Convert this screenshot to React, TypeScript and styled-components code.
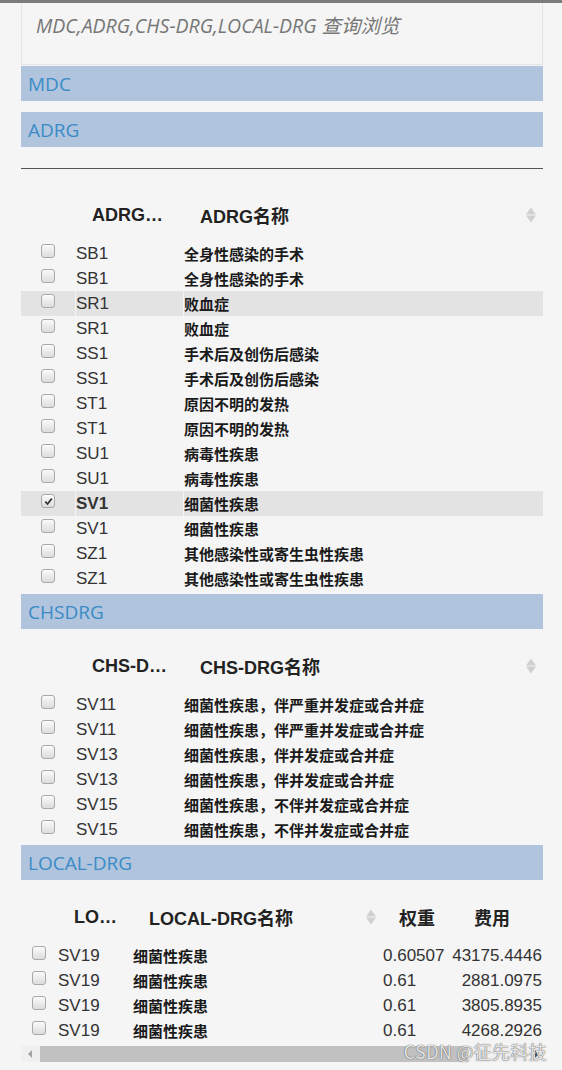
import React from "react";
import styled, { createGlobalStyle } from "styled-components";

type Row = { code: string; name: string; weight?: string; fee?: string };

const adrgRows: Row[] = [
  { code: "SB1", name: "全身性感染的手术" },
  { code: "SB1", name: "全身性感染的手术" },
  { code: "SR1", name: "败血症" },
  { code: "SR1", name: "败血症" },
  { code: "SS1", name: "手术后及创伤后感染" },
  { code: "SS1", name: "手术后及创伤后感染" },
  { code: "ST1", name: "原因不明的发热" },
  { code: "ST1", name: "原因不明的发热" },
  { code: "SU1", name: "病毒性疾患" },
  { code: "SU1", name: "病毒性疾患" },
  { code: "SV1", name: "细菌性疾患" },
  { code: "SV1", name: "细菌性疾患" },
  { code: "SZ1", name: "其他感染性或寄生虫性疾患" },
  { code: "SZ1", name: "其他感染性或寄生虫性疾患" },
];

const chsRows: Row[] = [
  { code: "SV11", name: "细菌性疾患，伴严重并发症或合并症" },
  { code: "SV11", name: "细菌性疾患，伴严重并发症或合并症" },
  { code: "SV13", name: "细菌性疾患，伴并发症或合并症" },
  { code: "SV13", name: "细菌性疾患，伴并发症或合并症" },
  { code: "SV15", name: "细菌性疾患，不伴并发症或合并症" },
  { code: "SV15", name: "细菌性疾患，不伴并发症或合并症" },
];

const localRows: Row[] = [
  { code: "SV19", name: "细菌性疾患", weight: "0.60507", fee: "43175.4446" },
  { code: "SV19", name: "细菌性疾患", weight: "0.61", fee: "2881.0975" },
  { code: "SV19", name: "细菌性疾患", weight: "0.61", fee: "3805.8935" },
  { code: "SV19", name: "细菌性疾患", weight: "0.61", fee: "4268.2926" },
];

const GlobalStyle = createGlobalStyle`
  html, body {
    margin: 0;
    padding: 0;
    background: #f5f5f5;
  }
  body {
    font-family: "Liberation Sans", Arial, "Noto Sans CJK SC", sans-serif;
    color: #333;
  }
`;

const Screen = styled.div`
  position: relative;
  width: 562px;
  height: 1070px;
  overflow: hidden;
  background: #f5f5f5;
`;

const TopStrip = styled.div`
  height: 3px;
  background: #7b7b7b;
`;

const Page = styled.div`
  width: 522px;
  margin-left: 21px;
`;

const TitleBox = styled.div`
  height: 62px;
  box-sizing: border-box;
  border: 1px solid #e4e4e4;
  border-top: 0;
  padding: 10px 0 0 14px;
`;

const TitleText = styled.div`
  font-family: "Open Sans", "Noto Sans CJK SC", sans-serif;
  font-style: italic;
  font-size: 19.5px;
  line-height: 26px;
  color: #777;
`;

const SectionBar = styled.div<{ $gap?: number }>`
  height: 35px;
  margin-top: ${(p) => p.$gap ?? 0}px;
  padding-left: 7px;
  background: #b0c4de;
  display: flex;
  align-items: center;
  font-family: "Open Sans", sans-serif;
  font-size: 19px;
  color: #3a8bc6;
`;

const Divider = styled.hr`
  height: 1px;
  border: 0;
  background: #555;
  margin: 21px 0 20px;
`;

const TableWrap = styled.div`
  margin-top: 11px;
  padding-bottom: 3px;
  overflow: hidden;
`;

const Grid = styled.div<{ $cols: string; $h: number; $active?: boolean }>`
  display: grid;
  grid-template-columns: ${(p) => p.$cols};
  height: ${(p) => p.$h}px;
  align-items: stretch;
  background: ${(p) => (p.$active ? "#e3e3e3" : "transparent")};
`;

const HeadCell = styled.div`
  position: relative;
  display: flex;
  align-items: center;
  padding-left: 17px;
  font-family: "Liberation Sans", Arial, "Noto Sans CJK SC", sans-serif;
  font-weight: 700;
  font-size: 18px;
  color: #222;
  white-space: nowrap;
  overflow: hidden;
`;

const Cell = styled.div<{ $bold?: boolean; $kind?: "code" | "name" | "num" }>`
  display: flex;
  align-items: center;
  border-left: 1px solid #f5f5f5;
  white-space: nowrap;
  overflow: visible;
  font-family: ${(p) =>
    p.$kind === "name"
      ? `"Noto Sans CJK SC", sans-serif`
      : `"Liberation Sans", Arial, sans-serif`};
  font-size: ${(p) => (p.$kind === "name" ? 15 : 17)}px;
  font-weight: ${(p) => (p.$bold ? 700 : p.$kind === "name" ? 600 : 400)};
  color: ${(p) => (p.$kind === "name" ? "#1a1a1a" : "#333")};
`;

const FeeCell = styled(Cell)`
  justify-content: flex-end;
  padding-right: 1px;
`;

const CheckCell = styled.div`
  display: flex;
  align-items: center;
  justify-content: center;
`;

const Box = styled.span`
  position: relative;
  width: 12px;
  height: 12px;
  border: 1px solid #a9a9a9;
  border-radius: 3px;
  background: linear-gradient(#fbfbfb, #dcdcdc);
  display: inline-flex;
  align-items: center;
  justify-content: center;
  margin-top: -5px;
`;

const SortArrows = styled.span<{ $right: number }>`
  position: absolute;
  right: ${(p) => p.$right}px;
  top: 50%;
  transform: translateY(-50%);
  display: flex;
  flex-direction: column;
  gap: 1px;
  &::before,
  &::after {
    content: "";
    border-left: 5px solid transparent;
    border-right: 5px solid transparent;
  }
  &::before {
    border-bottom: 7px solid #d0d0d0;
  }
  &::after {
    border-top: 7px solid #d0d0d0;
  }
`;

const ScrollTrack = styled.div`
  position: relative;
  height: 16px;
  background: #f0f0f0;
  display: flex;
  align-items: center;
`;

const ScrollArrow = styled.span<{ $dir: "left" | "right" }>`
  width: 0;
  height: 0;
  border-top: 4px solid transparent;
  border-bottom: 4px solid transparent;
  ${(p) =>
    p.$dir === "left"
      ? "border-right: 4px solid #a3a3a3; margin: 0 8px 0 7px;"
      : "border-left: 4px solid #505050; margin: 0 4px 0 auto;"}
`;

const ScrollThumb = styled.div`
  width: 428px;
  height: 16px;
  background: #c1c1c1;
`;

const Watermark = styled.div`
  position: absolute;
  right: 15px;
  bottom: 6px;
  font-family: "Noto Sans CJK SC", sans-serif;
  font-size: 18px;
  color: rgba(255, 255, 255, 0.85);
  text-shadow: 0 0 1px #555, 0 0 1px #777;
  letter-spacing: 0.3px;
`;

function Check(params: { checked?: boolean }) {
  return (
    <CheckCell>
      <Box>
        {params.checked && (
          <svg width="9" height="9" viewBox="0 0 9 9">
            <path d="M1.3 4.6 L3.5 7 L7.8 1.6" fill="none" stroke="#333" strokeWidth="1.7" />
          </svg>
        )}
      </Box>
    </CheckCell>
  );
}

function SimpleTable(params: {
  codeHead: string;
  nameHead: string;
  rows: Row[];
  active?: number[];
  checked?: number;
}) {
  const { codeHead, nameHead, rows, active = [], checked } = params;
  const cols = "54px 108px 1fr";
  return (
    <TableWrap>
      <Grid $cols={cols} $h={52}>
        <HeadCell />
        <HeadCell>{codeHead}</HeadCell>
        <HeadCell>
          {nameHead}
          <SortArrows $right={7} />
        </HeadCell>
      </Grid>
      {rows.map((r, i) => (
        <Grid key={i} $cols={cols} $h={25} $active={active.includes(i)}>
          <Check checked={checked === i} />
          <Cell $kind="code" $bold={checked === i}>
            {r.code}
          </Cell>
          <Cell $kind="name">{r.name}</Cell>
        </Grid>
      ))}
    </TableWrap>
  );
}

function LocalTable(params: { rows: Row[] }) {
  const cols = "36px 75px 250px 75px 86px";
  return (
    <TableWrap>
      <Grid $cols={cols} $h={52}>
        <HeadCell />
        <HeadCell>LO…</HeadCell>
        <HeadCell>
          LOCAL-DRG名称
          <SortArrows $right={6} />
        </HeadCell>
        <HeadCell>权重</HeadCell>
        <HeadCell>费用</HeadCell>
      </Grid>
      {params.rows.map((r, i) => (
        <Grid key={i} $cols={cols} $h={25}>
          <Check />
          <Cell $kind="code">{r.code}</Cell>
          <Cell $kind="name">{r.name}</Cell>
          <Cell $kind="num">{r.weight}</Cell>
          <FeeCell $kind="num">{r.fee}</FeeCell>
        </Grid>
      ))}
    </TableWrap>
  );
}

export default function App() {
  return (
    <Screen>
      <GlobalStyle />
      <TopStrip />
      <Page>
        <TitleBox>
          <TitleText>MDC,ADRG,CHS-DRG,LOCAL-DRG 查询浏览</TitleText>
        </TitleBox>
        <SectionBar $gap={1}>MDC</SectionBar>
        <SectionBar $gap={11}>ADRG</SectionBar>
        <Divider />
        <SimpleTable
          codeHead="ADRG…"
          nameHead="ADRG名称"
          rows={adrgRows}
          active={[2, 10]}
          checked={10}
        />
        <SectionBar>CHSDRG</SectionBar>
        <SimpleTable codeHead="CHS-D…" nameHead="CHS-DRG名称" rows={chsRows} />
        <SectionBar>LOCAL-DRG</SectionBar>
        <LocalTable rows={localRows} />
        <ScrollTrack>
          <ScrollArrow $dir="left" />
          <ScrollThumb />
          <ScrollArrow $dir="right" />
        </ScrollTrack>
      </Page>
      <Watermark>CSDN @征先科技</Watermark>
    </Screen>
  );
}
